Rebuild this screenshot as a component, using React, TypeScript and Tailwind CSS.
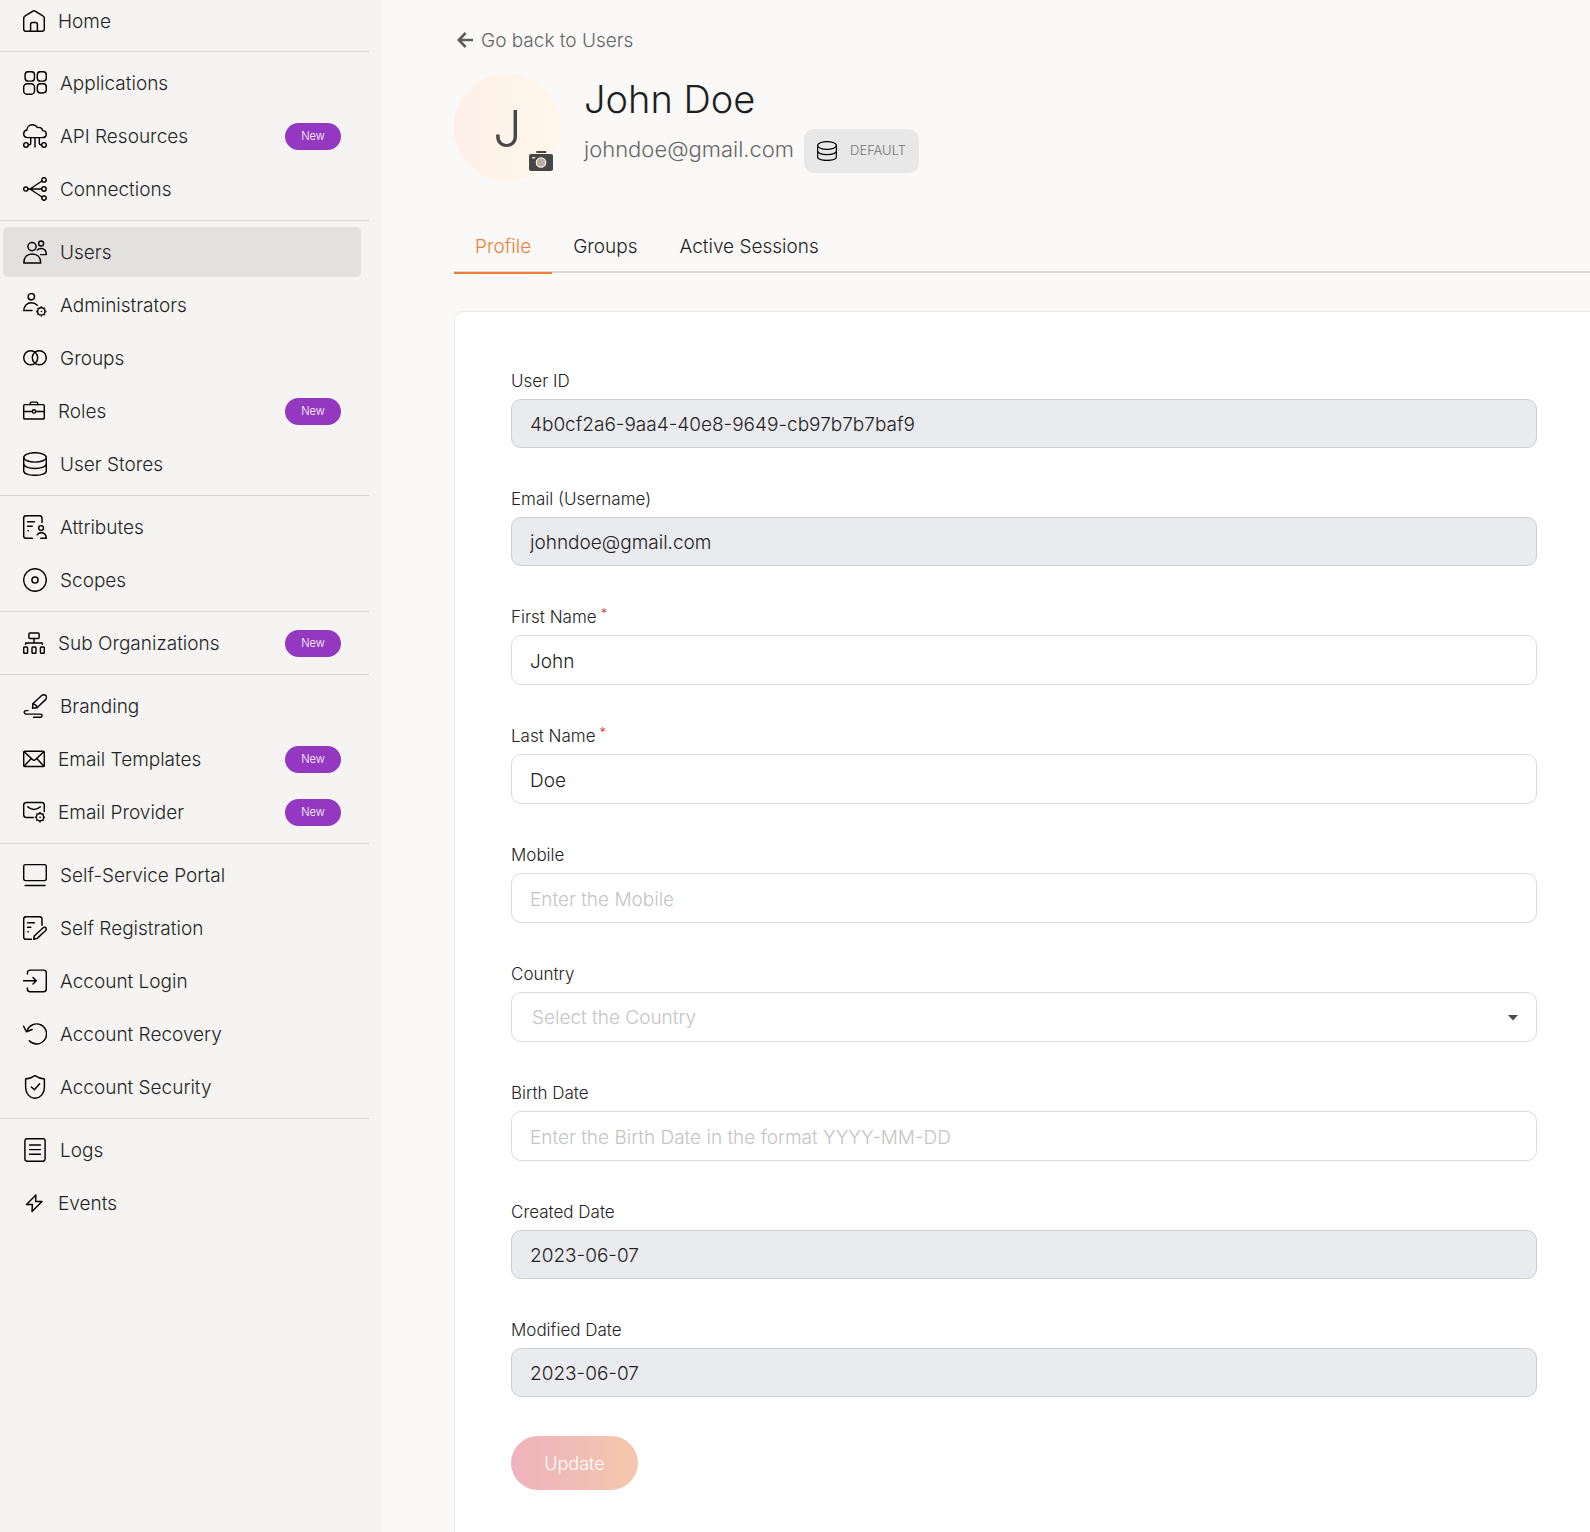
import React from "react";

type IconProps = { size: 22 | 24; children: React.ReactNode };

function Icon({ size, children }: IconProps) {
  return (
    <svg
      viewBox={size === 24 ? "0 0 24 24" : "0 0 22 22"}
      className={size === 24 ? "size-6 shrink-0" : "size-[22px] shrink-0"}
      fill="none"
      stroke="#000"
      strokeWidth="1.45"
      strokeLinecap="round"
      strokeLinejoin="round"
      aria-hidden="true"
    >
      {children}
    </svg>
  );
}

const HomeIcon = (
  <Icon size={22}>
    <path d="M.7 8.4Q.7 6.6 2.1 5.8L9.5 1.3Q11 .4 12.5 1.3L19.9 5.8Q21.3 6.6 21.3 8.4V19Q21.3 21.3 19 21.3H3Q.7 21.3 .7 19Z" />
    <path d="M7.6 21.3V14.3Q7.6 12.4 9.5 12.4H12.5Q14.4 12.4 14.4 14.3V21.3" />
  </Icon>
);

const AppsIcon = (
  <Icon size={24}>
    <rect x="2.1" y=".7" width="9.4" height="9.4" rx="3.2" />
    <rect x="14.3" y=".7" width="9" height="9.4" rx="3.2" />
    <rect x=".7" y="12.7" width="10.8" height="10.6" rx="3.4" />
    <rect x="14.3" y="12.7" width="9" height="9.2" rx="3.2" />
  </Icon>
);

const ApiIcon = (
  <Icon size={24}>
    <path d="M4.6 13.6C2.3 13.4.7 11.9.7 9.8.7 7.8 2 6.400 3.900 6 4 2.900 6.400.7 9.400.7 11.600.7 13.400 1.800 14.300 3.500 17 2.900 19.300 4.300 19.700 6.600 21.900 6.800 23.300 8.200 23.300 10.100 23.300 12.100 21.700 13.600 19.400 13.600Z" />
    <path d="M7.700 13.800V19.200Q7.700 20.800 5.400 20.800M16.300 13.800V19.200Q16.300 20.800 18.600 20.800M12 13.800V23.400" strokeLinecap="butt" />
    <circle cx="3" cy="20.900" r="2.300" />
    <circle cx="21" cy="20.900" r="2.300" />
  </Icon>
);

const ConnectionsIcon = (
  <Icon size={24}>
    <circle cx="2.800" cy="12" r="2.100" />
    <circle cx="21" cy="2.900" r="2.200" />
    <circle cx="21" cy="12" r="2.200" />
    <circle cx="21" cy="21.100" r="2.200" />
    <path d="M5 12H18.700M7 12L19 4M7 12L19 20" />
  </Icon>
);

const UsersIcon = (
  <Icon size={24}>
    <circle cx="9" cy="6.600" r="4.100" />
    <path d="M.8 22.900C.8 17.300 4.200 14 9.200 14S17.700 17.300 17.700 22.900Z" />
    <circle cx="18.100" cy="3.500" r="2.500" />
    <path d="M14.300 9.900C15.300 8.900 16.600 8.400 18 8.400 21.400 8.400 23.300 10.800 23.300 14.600H17.600" />
  </Icon>
);

function Gear({ x, y }: { x: number; y: number }) {
  return (
    <g transform={`translate(${x} ${y})`}>
      <circle r="3.700" />
      <circle r=".5" fill="#000" strokeWidth=".5" />
      <path
        d="M0-4.300V-5.200M0 4.300V5.200M-4.300 0H-5.200M4.300 0H5.200M3-3L3.600-3.600M-3 3L-3.600 3.600M3 3L3.600 3.600M-3-3L-3.600-3.600"
        strokeWidth="1.500"
        strokeLinecap="butt"
      />
    </g>
  );
}

const AdminIcon = (
  <Icon size={24}>
    <circle cx="8.300" cy="3.800" r="3.200" />
    <path d="M14.200 12.300C12.700 10.600 10.700 9.800 8.400 9.800 3.900 9.800.8 12.900.8 17.400H9" />
    <Gear x={18.3} y={18.4} />
  </Icon>
);

const GroupsIcon = (
  <Icon size={24}>
    <circle cx="7.700" cy="11.700" r="7" />
    <circle cx="16.300" cy="11.700" r="7" />
  </Icon>
);

const RolesIcon = (
  <Icon size={22}>
    <rect x=".7" y="4.600" width="20.600" height="14.400" rx="1.200" />
    <path d="M7.300 4.600V3.300Q7.300 2.100 8.500 2.100H13.500Q14.700 2.100 14.700 3.300V4.600M.7 11.400H9.200M12.800 11.400H21.300" />
    <circle cx="11" cy="11.400" r="1.700" />
  </Icon>
);

const diskPaths = (
  <>
    <ellipse cx="12" cy="5.400" rx="11.300" ry="4.700" />
    <path d="M.7 5.400V19C.7 21.500 5.500 23.300 12 23.300S23.300 21.500 23.300 19V5.400" />
    <path d="M.7 12C.7 14.400 5.500 16.400 12 16.400S23.300 14.400 23.300 12" />
  </>
);

const StoresIcon = <Icon size={24}>{diskPaths}</Icon>;

const AttributesIcon = (
  <Icon size={24}>
    <path d="M9.300 23.300H3Q.7 23.300 .7 21V3Q.7 .7 3 .7H16.800Q19 .7 19 3V7.600" />
    <path d="M4.600 6.700H11.400M4.600 11.200H9.200M5 15.800H5.300" />
    <circle cx="18.100" cy="13" r="2.400" />
    <path d="M14.200 19.800C14.900 18.500 16.300 17.700 18 17.700 21 17.700 23.200 19.900 23.300 23.300H17.800" />
  </Icon>
);

const ScopesIcon = (
  <Icon size={24}>
    <circle cx="12" cy="12" r="11.300" />
    <circle cx="12" cy="12" r="3.100" />
  </Icon>
);

const SubOrgIcon = (
  <Icon size={22}>
    <rect x="5.900" y=".9" width="10.200" height="5.600" rx="1" />
    <rect x=".7" y="14.900" width="3.900" height="6.400" rx="1" />
    <rect x="9" y="14.900" width="4" height="6.400" rx="1" />
    <rect x="17.400" y="14.900" width="3.900" height="6.400" rx="1" />
    <path d="M11 6.500V10.800M2.600 12.200V10.900H19.400V12.200" />
  </Icon>
);

const BrandingIcon = (
  <Icon size={24}>
    <path d="M9.600 14.200L9.800 9.700 18.400 1.800C20 .4 22 .5 23 1.800 23.900 3.100 23.500 4.700 22.300 5.900L14 13.700Z" />
    <path d="M10 9.900C12 10.100 13.600 11.500 14 13.500" />
    <path d="M5 16.600H2.600A1.800 1.800 0 0 0 2.600 20.100H17.600Q19.100 20.100 19.100 21.600 19.100 23.200 17.500 23.200H10.600" />
  </Icon>
);

const MailIcon = (
  <Icon size={22}>
    <rect x=".7" y="3.300" width="20.600" height="15.200" rx="1.200" />
    <path d="M1.200 3.800L9.600 11.600Q11 12.800 12.400 11.600L20.800 3.800M1.200 18L8 10.800M20.800 18L14 10.800" />
  </Icon>
);

const MailGearIcon = (
  <Icon size={22}>
    <path d="M10.300 16.500H3.400Q.7 16.500 .7 13.800V4.200Q.7 1.500 3.400 1.500H18.600Q21.300 1.500 21.300 4.200V10.500" />
    <path d="M4.700 5.700C8.200 9.300 13.800 9.300 17.300 5.700" />
    <Gear x={17} y={16.2} />
  </Icon>
);

const PortalIcon = (
  <Icon size={24}>
    <rect x=".7" y="1.600" width="22.600" height="16" rx="1.800" />
    <path d="M2.200 22.400H22" />
  </Icon>
);

const RegistrationIcon = (
  <Icon size={24}>
    <path d="M8.400 23.300H3Q.7 23.300 .7 21V3Q.7 .7 3 .7H16.800Q19 .7 19 3V9.200" />
    <path d="M4.600 6.700H11.400M4.600 11.200H7.800M5 15.800H5.300" />
    <path d="M10.700 23.300L11.300 20 19.900 12C21 11 22.400 11 23 11.900 23.600 12.800 23.300 13.900 22.400 14.800L14.200 22.400Z" />
  </Icon>
);

const LoginIcon = (
  <Icon size={24}>
    <path d="M4.400 5V3.900Q4.400 1.100 7.200 1.100H20.500Q23.300 1.100 23.300 3.900V19.900Q23.300 22.700 20.500 22.700H7.200Q4.400 22.700 4.400 19.900V18.900" />
    <path d="M.5 11.700H13.200M10 8.400L13.300 11.700 10 15" />
  </Icon>
);

const RecoveryIcon = (
  <Icon size={24}>
    <path d="M4 9A10 10 0 1 1 6.300 18.800" />
    <path d="M.6 4.300L3.400 9.700 9.200 7.500" />
  </Icon>
);

const SecurityIcon = (
  <Icon size={24}>
    <path d="M12 .7C14.700 2.600 17.700 3.800 21.400 4V12.600C21.400 18.800 17.300 22.900 12 23.300 6.700 22.900 2.600 18.800 2.600 12.600V4C6.300 3.800 9.300 2.600 12 .7Z" />
    <path d="M8.400 12L11.400 14.800 16.600 8.700" />
  </Icon>
);

const LogsIcon = (
  <Icon size={24}>
    <rect x="1.900" y=".7" width="20.200" height="22.600" rx="2.200" />
    <path d="M6.600 6.900H17.400M6.600 11.600H17.400M6.600 16.300H17.400" />
  </Icon>
);

const EventsIcon = (
  <Icon size={22}>
    <path d="M12.900 3L3.500 12.400H9.400L9 19.500 19 9.500H12.600Z" />
  </Icon>
);

type NavItem = { label: string; icon: React.ReactNode; isNew?: boolean; active?: boolean };

const sections: NavItem[][] = [
  [
    { label: "Applications", icon: AppsIcon },
    { label: "API Resources", icon: ApiIcon, isNew: true },
    { label: "Connections", icon: ConnectionsIcon },
  ],
  [
    { label: "Users", icon: UsersIcon, active: true },
    { label: "Administrators", icon: AdminIcon },
    { label: "Groups", icon: GroupsIcon },
    { label: "Roles", icon: RolesIcon, isNew: true },
    { label: "User Stores", icon: StoresIcon },
  ],
  [
    { label: "Attributes", icon: AttributesIcon },
    { label: "Scopes", icon: ScopesIcon },
  ],
  [{ label: "Sub Organizations", icon: SubOrgIcon, isNew: true }],
  [
    { label: "Branding", icon: BrandingIcon },
    { label: "Email Templates", icon: MailIcon, isNew: true },
    { label: "Email Provider", icon: MailGearIcon, isNew: true },
  ],
  [
    { label: "Self-Service Portal", icon: PortalIcon },
    { label: "Self Registration", icon: RegistrationIcon },
    { label: "Account Login", icon: LoginIcon },
    { label: "Account Recovery", icon: RecoveryIcon },
    { label: "Account Security", icon: SecurityIcon },
  ],
  [
    { label: "Logs", icon: LogsIcon },
    { label: "Events", icon: EventsIcon },
  ],
];

function Sidebar() {
  return (
    <nav className="w-[382px] shrink-0 bg-[#f5f4f2] pr-[13px] text-[19px] text-[#242424]" aria-label="Main">
      <a href="#home" className="mb-[9px] flex h-[42px] items-center gap-[13px] pl-[23px]">
        {HomeIcon}
        <span className="pt-[2px]">Home</span>
      </a>
      {sections.map((items) => (
        <ul key={items[0].label} className="flex flex-col gap-[3px] border-t border-[#d6d6d4] py-[6px] pr-2 pl-[3px]">
          {items.map((item) => (
            <li key={item.label}>
              <a
                href="#nav"
                aria-current={item.active ? "page" : undefined}
                className={
                  item.active
                    ? "flex h-[50px] items-center gap-[13px] rounded-[5px] bg-[#e2e1df] px-5"
                    : "flex h-[50px] items-center gap-[13px] px-5"
                }
              >
                {item.icon}
                <span className="pt-[2px]">{item.label}</span>
                {item.isNew && (
                  <span className="ml-auto flex h-[27px] w-14 items-center justify-center rounded-full bg-[#9438c1] text-[11px] text-white">
                    New
                  </span>
                )}
              </a>
            </li>
          ))}
        </ul>
      ))}
    </nav>
  );
}

type FieldDef = {
  id: string;
  label: string;
  value?: string;
  placeholder?: string;
  required?: boolean;
  readOnly?: boolean;
  select?: boolean;
};

const fields: FieldDef[] = [
  { id: "user-id", label: "User ID", value: "4b0cf2a6-9aa4-40e8-9649-cb97b7b7baf9", readOnly: true },
  { id: "email", label: "Email (Username)", value: "johndoe@gmail.com", readOnly: true },
  { id: "first-name", label: "First Name", value: "John", required: true },
  { id: "last-name", label: "Last Name", value: "Doe", required: true },
  { id: "mobile", label: "Mobile", placeholder: "Enter the Mobile" },
  { id: "country", label: "Country", placeholder: "Select the Country", select: true },
  { id: "birth-date", label: "Birth Date", placeholder: "Enter the Birth Date in the format YYYY-MM-DD" },
  { id: "created", label: "Created Date", value: "2023-06-07", readOnly: true },
  { id: "modified", label: "Modified Date", value: "2023-06-07", readOnly: true },
];

function Field({ field }: { field: FieldDef }) {
  return (
    <div className="flex flex-col gap-[6px]">
      <label htmlFor={field.id} className="flex h-6 items-center gap-1 text-[17px] text-[#242424]">
        <span className="pt-[2px]">{field.label}</span>
        {field.required && <span className="self-start text-[13px] leading-4 text-[#db2828]">*</span>}
      </label>
      {field.select ? (
        <div className="relative">
          <select
            id={field.id}
            defaultValue=""
            className="h-[50px] w-full appearance-none rounded-[10px] border border-[#dcdcdc] bg-white px-5 pt-[2px] text-[19px] text-[#c4c4c4]"
          >
            <option value="">{field.placeholder}</option>
          </select>
          <svg viewBox="0 0 10 6" className="pointer-events-none absolute top-[23px] right-[19px] h-[6px] w-[10px]" aria-hidden="true">
            <path d="M0 0H10L5 5.500Z" fill="#4a4a4a" />
          </svg>
        </div>
      ) : (
        <input
          id={field.id}
          type="text"
          defaultValue={field.value}
          placeholder={field.placeholder}
          readOnly={field.readOnly}
          className={
            field.readOnly
              ? "h-[49px] w-full rounded-[10px] border border-[#cccdd1] bg-[#eaebef] px-[18px] pt-[2px] text-[19px] text-[#222]"
              : "h-[50px] w-full rounded-[10px] border border-[#dcdcdc] bg-white px-[18px] pt-[2px] text-[19px] text-[#222] placeholder:text-[#c4c4c4]"
          }
        />
      )}
    </div>
  );
}

export default function App() {
  return (
    <div className="flex min-h-screen bg-[#faf9f8] font-['Inter',sans-serif] font-[350]">
      <Sidebar />
      <main className="flex min-w-0 flex-1 flex-col pl-[72px]">
        <a href="#users" className="mt-7 flex h-6 items-center gap-2 self-start pl-[3px] text-[19px] text-[#646464]">
          <svg viewBox="0 0 16 16" className="size-4" fill="none" stroke="#5c5c5c" strokeWidth="2.600" aria-hidden="true">
            <path d="M8.600 1L1.800 8 8.600 15M2 8H16" />
          </svg>
          <span className="pt-[2px]">Go back to Users</span>
        </a>
        <header className="mt-[22px] flex">
          <div className="relative flex size-[107px] items-center justify-center rounded-full bg-linear-to-r from-[#fef0e8] to-[#fff7ec] pt-1 text-[50px] text-[#474747]">
            J
            <button type="button" aria-label="Change photo" className="absolute right-2 bottom-[10px]">
              <svg viewBox="0 0 24 20" className="block h-5 w-6" aria-hidden="true">
                <rect x="7" width="10.500" height="2" rx="1" fill="#474747" />
                <rect y="3" width="24" height="17" rx="2" fill="#474747" />
                <rect x="3" y="6" width="3.500" height="1.500" rx=".7" fill="#e6dccf" />
                <circle cx="12" cy="11.500" r="4.700" fill="#b5ada6" stroke="#fdf1e6" strokeWidth="1.200" />
              </svg>
            </button>
          </div>
          <div className="ml-[23px]">
            <h1 className="h-[55px] text-[38px] leading-[50px] text-[#1f1f1f]">John Doe</h1>
            <div className="flex h-11 items-center gap-[10px]">
              <span className="pb-1 text-[22px] text-[#666]">johndoe@gmail.com</span>
              <span className="flex h-11 items-center gap-[13px] rounded-[10px] bg-[#e8e8e8] px-[13px] text-[13px] text-[#747474]">
                <svg viewBox="0 0 24 24" className="size-5" fill="none" stroke="#000" strokeWidth="1.500" aria-hidden="true">
                  {diskPaths}
                </svg>
                DEFAULT
              </span>
            </div>
          </div>
        </header>
        <div role="tablist" className="mt-[41px] flex h-[51px] border-b-2 border-[#d9d8d7] text-[19px] text-[#222]">
          <button type="button" role="tab" aria-selected="true" className="-mb-[3px] border-b-2 border-[#f07f34] px-[21px] text-[#f07f34]">
            Profile
          </button>
          <button type="button" role="tab" aria-selected="false" className="px-[21px] pt-[2px]">
            Groups
          </button>
          <button type="button" role="tab" aria-selected="false" className="px-[21px] pt-[2px]">
            Active Sessions
          </button>
        </div>
        <form className="mt-[38px] flex flex-1 flex-col gap-[39px] rounded-tl-[10px] border-t border-l border-[#ebebea] bg-white pt-[57px] pr-[53px] pb-10 pl-14">
          {fields.map((field) => (
            <Field key={field.id} field={field} />
          ))}
          <button
            type="button"
            className="h-[54px] w-[127px] rounded-full bg-linear-to-r from-[#eeb2bd] to-[#f5c7ad] text-[18px] text-white"
          >
            Update
          </button>
        </form>
      </main>
    </div>
  );
}
